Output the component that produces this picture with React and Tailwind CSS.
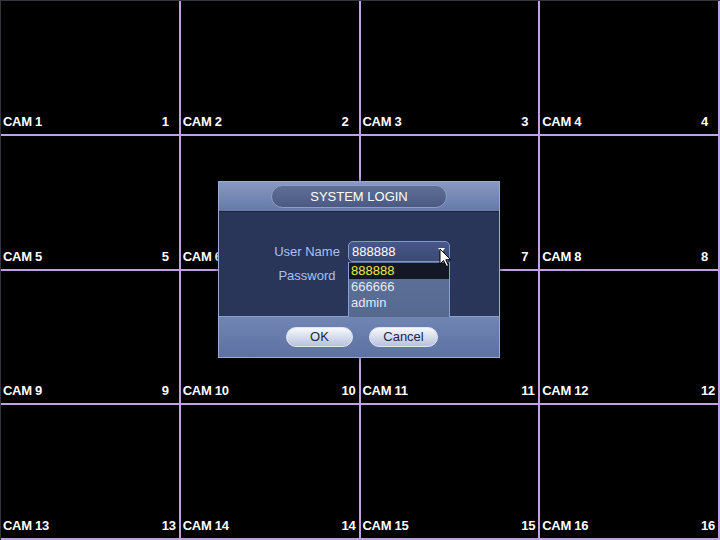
const cams = Array.from({ length: 16 }, (_, i) => i + 1);

function Cursor() {
  return (
    <svg className="absolute left-[439px] top-[248px] z-20" width="13" height="20" viewBox="0 0 13 20">
      <path d="M1 1 L1 16 L4.5 12.5 L7.5 18.5 L9.5 17.5 L6.8 11.8 L11.5 11.5 Z" fill="#ffffff" stroke="#000000" strokeWidth="1" strokeLinejoin="round" />
    </svg>
  );
}

export default function App() {
  return (
    <div className="relative h-[540px] w-[720px] overflow-hidden bg-black font-['Liberation_Sans',Arial,sans-serif]">
      <div className="grid h-full w-full grid-cols-4 grid-rows-4 gap-[2px] border-t border-l border-[#34343f] bg-[#c0a2e3] pr-[2px] pb-[2px]">
        {cams.map((n) => (
          <div
            key={n}
            className="flex items-end justify-between bg-black pb-[5px] pl-[2px] text-[13px] font-bold leading-[15px] tracking-[-0.3px] text-white"
          >
            <span>CAM {n}</span>
            <span className="w-[17px]">{n}</span>
          </div>
        ))}
      </div>

      <div className="absolute left-[218px] top-[181px] flex h-[177px] w-[282px] flex-col border border-[#9aabd3] shadow-[0_0_4px_rgba(0,0,0,0.6)]">
        <div className="flex h-[29px] items-center justify-center bg-gradient-to-b from-[#8799c3] to-[#6579a8]">
          <div className="flex h-[23px] w-[176px] items-center justify-center rounded-full border border-[#8e9ec6] bg-gradient-to-b from-[#5f6f96] to-[#4a5a82] text-[13px] text-white">
            SYSTEM LOGIN
          </div>
        </div>
        <div className="h-[1px] bg-[#1c243c]" />
        <div className="relative flex flex-1 flex-col bg-[#29365a] pt-[29px] text-[13px]">
          <div className="flex h-[21px] items-center">
            <div className="ml-[49px] w-[78px] text-center text-[#a9c0f0]">User Name</div>
            <div className="relative ml-[2px] flex h-[21px] w-[102px] items-center rounded-[5px] border border-[#7f98cf] bg-gradient-to-b from-[#46578a] to-[#3a4a72] pl-[3px] text-white">
              <span className="leading-[14px]">888888</span>
              <svg className="absolute right-[4px] top-[6px]" width="7" height="5" viewBox="0 0 7 5">
                <path d="M0 0 L7 0 L3.5 5 Z" fill="#ffffff" />
              </svg>
            </div>
          </div>
          <div className="mt-[3px] flex h-[21px] items-center">
            <div className="ml-[49px] w-[78px] text-center text-[#a9c0f0]">Password</div>
          </div>
          <div className="absolute left-[129px] top-[50px] z-10 flex h-[55px] w-[102px] flex-col border-x border-[#8aa0d2] bg-gradient-to-b from-[#5e719b] to-[#56698f] pt-[1px]">
            <div className="h-[16px] bg-[#141826] pl-[2px] leading-[16px] text-[#f2e35a]">888888</div>
            <div className="h-[16px] pl-[2px] leading-[16px] text-[#e2e8f4]">666666</div>
            <div className="h-[16px] pl-[2px] leading-[16px] text-[#e2e8f4]">admin</div>
          </div>
        </div>
        <div className="flex h-[41px] items-center justify-center gap-[16px] border-t border-[#8ea0ca] bg-gradient-to-b from-[#7185b4] to-[#5d72a2] pl-[6px] text-[13px] text-[#1d2844]">
          <div className="flex h-[20px] w-[67px] items-center justify-center rounded-full border border-[#dfe5f2] bg-gradient-to-b from-[#f6f8fc] to-[#b7c3dc]">
            OK
          </div>
          <div className="flex h-[20px] w-[69px] items-center justify-center rounded-full border border-[#dfe5f2] bg-gradient-to-b from-[#f6f8fc] to-[#b7c3dc]">
            Cancel
          </div>
        </div>
      </div>
      <Cursor />
    </div>
  );
}
